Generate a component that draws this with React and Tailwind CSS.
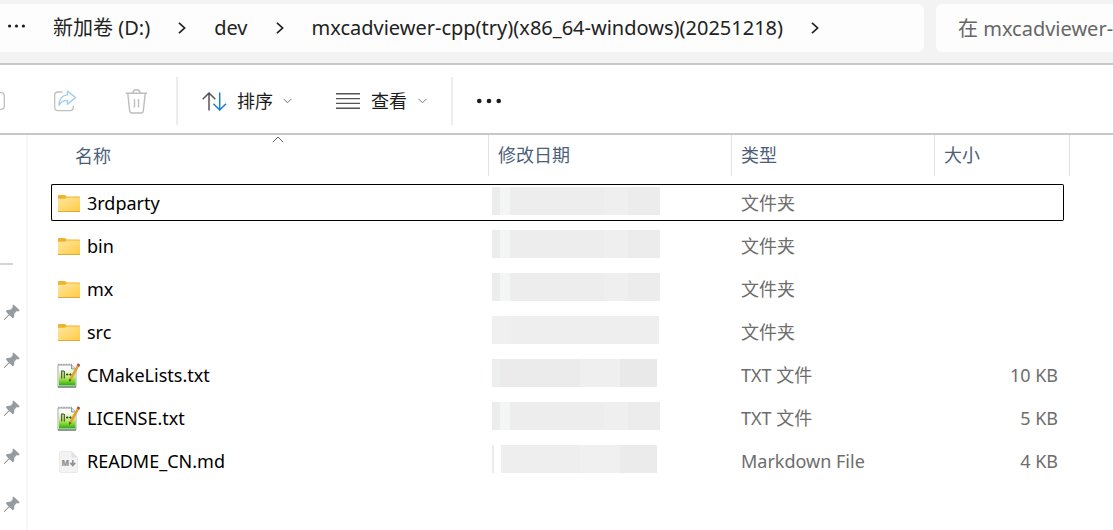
import React, { useState } from 'react';

const crumbs = ['新加卷 (D:)', 'dev', 'mxcadviewer-cpp(try)(x86_64-windows)(20251218)'];

const files = [
    { name: '3rdparty', kind: 'folder', type: '文件夹', size: '', bar: 'a' },
    { name: 'bin', kind: 'folder', type: '文件夹', size: '', bar: 'a' },
    { name: 'mx', kind: 'folder', type: '文件夹', size: '', bar: 'a' },
    { name: 'src', kind: 'folder', type: '文件夹', size: '', bar: 'b' },
    { name: 'CMakeLists.txt', kind: 'text', type: 'TXT 文件', size: '10 KB', bar: 'c' },
    { name: 'LICENSE.txt', kind: 'text', type: 'TXT 文件', size: '5 KB', bar: 'a' },
    { name: 'README_CN.md', kind: 'markdown', type: 'Markdown File', size: '4 KB', bar: 'd' },
];

// segments of the blanked out date, left to right
const bars = {
    a: ['w-2 bg-[#ececec]', 'w-2.5 bg-[#f4f5f5]', 'w-[94px] bg-[#ededed]', 'w-6 bg-[#efefef]', 'w-8 bg-[#ececec]'],
    b: ['w-[19px] bg-[#f0f0f0]', 'w-[148px] bg-[#eeeeee]'],
    c: ['w-2 bg-[#edefef]', 'w-[80px] bg-[#ebebeb]', 'w-10 bg-[#efefef]', 'w-[37px] bg-[#e9e9e9]'],
    d: ['w-0.5 bg-[#ebebeb]', 'w-[7px]', 'w-[79px] bg-[#eeeeee]', 'w-10 bg-[#f0f0f0]', 'w-[37px] bg-[#ebebeb]'],
};

function FolderIcon() {
    return (
        <svg width="22" height="18" viewBox="0 0 22 18" aria-hidden="true">
            <defs>
                <linearGradient id="folder" x1="0" y1="0" x2="1" y2="1">
                    <stop offset="0" stopColor="#ffe7a0" />
                    <stop offset="1" stopColor="#ffcb45" />
                </linearGradient>
            </defs>
            <path d="M0 1Q0 0 1 0H7L8.6 1.6H21.2Q22 1.6 22 2.4V7H0Z" fill="#edb32b" />
            <path d="M0 3.8H7L8.8 2.4H22V16.4H0Z" fill="url(#folder)" />
            <path d="M0 16H22V17H0Z" fill="#dfaa3a" />
        </svg>
    );
}

function TextFileIcon() {
    return (
        <svg width="23" height="25" viewBox="0 0 23 25" aria-hidden="true">
            <defs>
                <linearGradient id="note" x1="0" y1="0" x2="0" y2="1">
                    <stop offset="0" stopColor="#f4fae9" />
                    <stop offset="0.45" stopColor="#c4ea72" />
                    <stop offset="0.75" stopColor="#6fd222" />
                    <stop offset="1" stopColor="#2f9e2a" />
                </linearGradient>
            </defs>
            <path d="M1 2H15L19 6V24H1Z" fill="#fbfbfb" stroke="#a4aba8" />
            <path d="M2 7H18.5V22.5H2Z" fill="url(#note)" />
            <path d="M1 1.5H15" stroke="#9aa3a8" strokeWidth="1.6" strokeDasharray="1.6 1" />
            <path d="M14.5 1.5V6H19" fill="#d8dee2" stroke="#7e878c" strokeWidth="0.8" />
            <path d="M4.7 7.5V15.5M5 8H6.8M7.3 8V15.5" stroke="#3a4a33" strokeWidth="1.1" />
            <path d="M9 11.5H11.4M12.2 11.5H14.6M10.2 10.3V12.7M13.4 10.3V12.7" stroke="#3a4a33" strokeWidth="1" />
            <path d="M1 24H19" stroke="#5b7c55" strokeWidth="1.2" />
            <path d="M21.4 2.2L13.3 16.6" stroke="#e3a12c" strokeWidth="2.6" />
            <path d="M22 1L21 3" stroke="#a5505b" strokeWidth="2.8" />
            <path d="M12.3 15.8L14.5 17L12 19Z" fill="#5d4526" />
        </svg>
    );
}

function MarkdownIcon() {
    return (
        <svg width="19" height="22" viewBox="0 0 19 22" aria-hidden="true">
            <path d="M1.5 0.5H12.5L18.5 6.5V20Q18.5 21.5 17 21.5H2Q0.5 21.5 0.5 20V1.5Q0.5 0.5 1.5 0.5Z" fill="#f3f3f3" stroke="#e9e9e9" />
            <path d="M12.5 0.5V6.5H18.5Z" fill="#e0e0e0" />
            <text x="2.4" y="15" fontSize="8" fontWeight="800" fontFamily="Open Sans, sans-serif" fill="#929292">M</text>
            <path d="M13.8 9V14M11.4 11.8L13.8 14.4L16.2 11.8" fill="none" stroke="#929292" strokeWidth="1.7" />
        </svg>
    );
}

function FileIcon({ kind }) {
    if (kind === 'folder') return <FolderIcon />;
    if (kind === 'text') return <TextFileIcon />;
    return <MarkdownIcon />;
}

function PinIcon() {
    return (
        <svg width="16" height="16" viewBox="0 0 16 16" aria-hidden="true">
            <path d="M9.6 0.4L15.6 6.2L14.2 7.4L12.8 7L10.3 9.6L10.2 13L8.7 14.2L5.5 11.2L0.8 15.8L0 15.9L0.1 15L4.7 10.4L1.8 7.4L3 6L6.4 5.7L8.8 3.3L8.4 1.8Z" fill="#959b9e" />
        </svg>
    );
}

function Chevron() {
    return (
        <svg width="8" height="12" viewBox="0 0 8 12" fill="none" stroke="#222" strokeWidth="1.7" aria-hidden="true">
            <path d="M1 0.8L6.6 6L1 11.2" />
        </svg>
    );
}

function SmallChevron() {
    return (
        <svg width="9" height="6" viewBox="0 0 9 6" fill="none" stroke="#777" aria-hidden="true">
            <path d="M0.5 0.8L4.5 4.8L8.5 0.8" />
        </svg>
    );
}

function Dots({ width, r }) {
    return (
        <svg width={width} height="6" viewBox={`0 0 ${width} 6`} fill="#1b1b1b" aria-hidden="true">
            <circle cx={r} cy="3" r={r} />
            <circle cx={width / 2} cy="3" r={r} />
            <circle cx={width - r} cy="3" r={r} />
        </svg>
    );
}

function AddressBar() {
    return (
        <header className="flex h-[65px] gap-3 border-b-2 border-[#c8c8c8] bg-[#f3f3f3] pt-1">
            <nav className="flex h-12 min-w-0 flex-1 items-center rounded-r-md bg-[#fdfdfd] pl-2 text-[20px] text-[#222]">
                <button aria-label="更多" className="mr-7 pb-1">
                    <Dots width={17} r={1.6} />
                </button>
                {crumbs.map((crumb) => (
                    <React.Fragment key={crumb}>
                        <a href="#" className="whitespace-nowrap">{crumb}</a>
                        <span className="mx-7 last:mr-0">
                            <Chevron />
                        </span>
                    </React.Fragment>
                ))}
            </nav>
            <input
                type="text"
                aria-label="搜索"
                placeholder="在 mxcadviewer-"
                className="h-12 w-[177px] shrink-0 rounded-l-md bg-[#fdfdfd] pl-[22px] text-[20px] outline-none placeholder:text-[#666]"
            />
        </header>
    );
}

function Toolbar() {
    return (
        <div className="flex h-[70px] items-center border-b-2 border-[#c8c8c8] bg-white pt-1 text-[18px] text-[#1b1b1b]">
            <button aria-label="重命名" className="w-[5px]">
                <svg width="5" height="18" viewBox="0 0 5 18" fill="none" stroke="#c0c0c0" strokeWidth="1.3" aria-hidden="true">
                    <path d="M0 0.7H1Q4.3 0.7 4.3 4V14Q4.3 17.3 1 17.3H0" />
                </svg>
            </button>
            <button aria-label="共享" className="ml-12">
                <svg width="24" height="22" viewBox="0 0 24 22" fill="none" strokeLinejoin="round" aria-hidden="true">
                    <path d="M9.5 2H5Q1.7 2 1.7 5.3V17.3Q1.7 20.6 5 20.6H17Q20.3 20.6 20.3 17.3V15.8" stroke="#c0c0c0" strokeWidth="1.3" />
                    <path d="M14.5 1.2L22.6 7.6L14.5 14.2V10.4Q9 10.2 6 15.2Q6.3 5.4 14.5 4.9Z" stroke="#a3cdec" strokeWidth="1.4" />
                </svg>
            </button>
            <button aria-label="删除" className="ml-12">
                <svg width="23" height="25" viewBox="0 0 23 25" fill="none" stroke="#bdbdbd" strokeWidth="1.4" aria-hidden="true">
                    <path d="M0.8 4.2H22.2M8 4Q8 0.8 11.5 0.8T15 4M2.8 4.4L4.7 22Q4.9 24 7 24H16Q18.1 24 18.3 22L20.2 4.4M9.5 10V18.5M13.5 10V18.5" />
                </svg>
            </button>
            <div className="ml-7 h-12 w-0.5 bg-[#ededed]" />
            <button className="ml-6 flex items-center gap-2.5">
                <svg width="25" height="19" viewBox="0 0 25 19" fill="none" strokeWidth="1.5" aria-hidden="true">
                    <path d="M7 18.5V1M0.7 7.3L7 1L13.3 7.3" stroke="#555" />
                    <path d="M17.7 0.5V18M11.4 11.7L17.7 18L24 11.7" stroke="#1a7fd0" />
                </svg>
                排序
                <SmallChevron />
            </button>
            <button className="ml-11 flex items-center gap-[11px]">
                <svg width="24" height="16" viewBox="0 0 24 16" stroke="#555" strokeWidth="1.4" aria-hidden="true">
                    <path d="M0 0.7H24M0 5.6H24M0 10.4H24M0 15.3H24" />
                </svg>
                查看
                <SmallChevron />
            </button>
            <div className="ml-6 h-12 w-0.5 bg-[#ededed]" />
            <button aria-label="查看更多" className="ml-6">
                <Dots width={24} r={2.3} />
            </button>
        </div>
    );
}

function Sidebar() {
    return (
        <aside className="w-7 shrink-0 border-r-2 border-[#f7f7f7] pt-32">
            <div className="mb-[39px] h-0.5 w-[13px] bg-[#d5d5d5]" />
            <div className="flex flex-col gap-8 pl-1">
                {[1, 2, 3, 4, 5].map((i) => (
                    <PinIcon key={i} />
                ))}
            </div>
        </aside>
    );
}

function HeaderCell({ children }) {
    return (
        <th className="h-[43px] p-0 align-top font-normal">
            <div className="flex h-[41px] items-center border-l border-[#e2e2e2] pl-[9px] text-[#4c607a]">{children}</div>
        </th>
    );
}

function FileTable() {
    const [focused, setFocused] = useState('3rdparty');

    return (
        <table className="-mt-1.5 w-full table-fixed border-separate border-spacing-x-0 border-spacing-y-1.5 text-left text-[18px]">
            <colgroup>
                <col />
                <col className="w-[243px]" />
                <col className="w-[203px]" />
                <col className="w-[130px]" />
                <col className="w-1.5" />
            </colgroup>
            <thead>
                <tr>
                    <th className="h-[43px] p-0 align-top font-normal">
                        <div className="flex h-[41px] flex-col pl-4 text-[#4c607a]">
                            <svg className="mt-px self-center" width="12" height="7" viewBox="0 0 12 7" fill="none" stroke="#666" aria-hidden="true">
                                <path d="M0.8 6.2L6 1L11.2 6.2" />
                            </svg>
                            <span className="pl-2 leading-[26px]">名称</span>
                        </div>
                    </th>
                    <HeaderCell>修改日期</HeaderCell>
                    <HeaderCell>类型</HeaderCell>
                    <HeaderCell>大小</HeaderCell>
                    <td className="p-0 align-top">
                        <div className="h-[41px] border-r border-[#e2e2e2]" />
                    </td>
                </tr>
            </thead>
            <tbody>
                {files.map((file) => {
                    const line = file.name === focused ? 'border-black' : 'border-transparent';

                    return (
                        <tr key={file.name} onClick={() => setFocused(file.name)} className="h-[37px]">
                            <td className={`rounded-l-xs border-y border-l pt-0.5 pr-0 pb-0 pl-[5px] ${line}`}>
                                <div className="flex items-center gap-[7px] text-black">
                                    <span className="flex w-[23px] justify-center">
                                        <FileIcon kind={file.kind} />
                                    </span>
                                    {file.name}
                                </div>
                            </td>
                            <td className={`border-y pt-0.5 pr-0 pb-0 pl-1 align-top ${line}`}>
                                <div className="flex h-7">
                                    {bars[file.bar].map((segment, i) => (
                                        <div key={i} className={segment} />
                                    ))}
                                </div>
                            </td>
                            <td className={`border-y pt-0.5 pr-0 pb-0 pl-2.5 text-[#6d6d6d] ${line}`}>{file.type}</td>
                            <td className={`rounded-r-xs border-y border-r pt-0.5 pr-[5px] pb-0 pl-0 text-right text-[#6d6d6d] ${line}`}>{file.size}</td>
                        </tr>
                    );
                })}
            </tbody>
        </table>
    );
}

export default function App() {
    return (
        <div className="flex min-h-screen flex-col overflow-hidden bg-white font-['Noto_Sans','Noto_Sans_CJK_SC',sans-serif]">
            <AddressBar />
            <Toolbar />
            <div className="flex flex-1">
                <Sidebar />
                <main className="min-w-0 flex-1 pr-[43px] pl-[23px]">
                    <FileTable />
                </main>
            </div>
        </div>
    );
}
